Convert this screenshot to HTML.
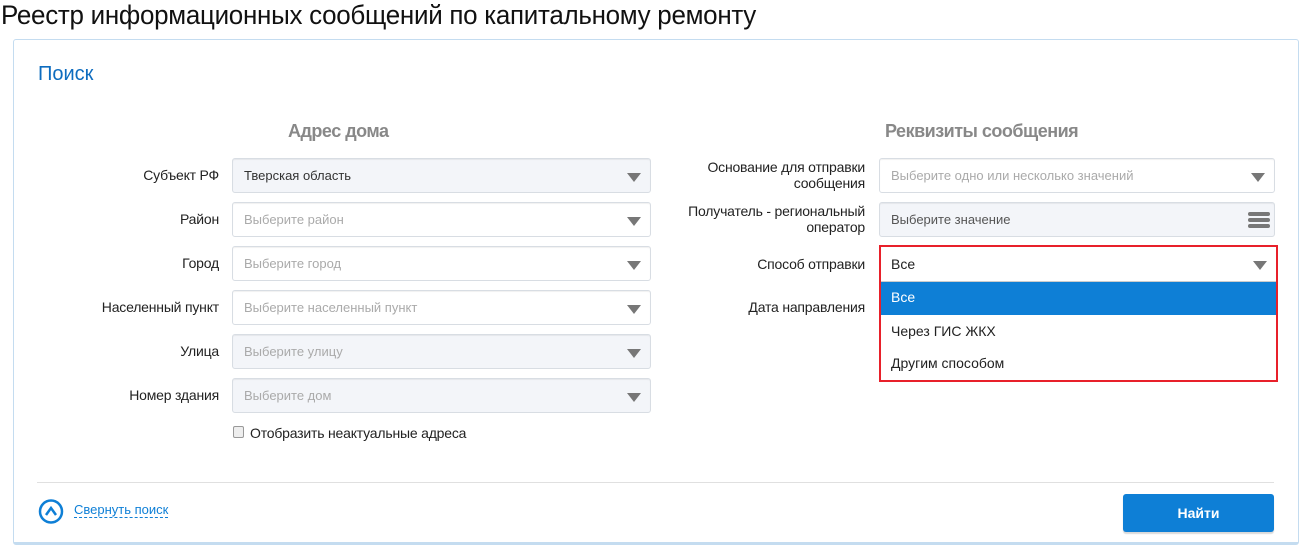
<!DOCTYPE html>
<html><head><meta charset="utf-8"><style>
*{box-sizing:border-box;margin:0;padding:0}
body{width:1304px;height:554px;background:#fff;font-family:"Liberation Sans Narrow","Liberation Sans",sans-serif;position:relative;overflow:hidden;color:#222}
.abs{position:absolute}
h1{position:absolute;left:1px;top:0;font-size:27px;font-weight:normal;color:#111;white-space:nowrap;letter-spacing:-0.3px;transform:scaleX(0.962);transform-origin:0 0}
.panel{position:absolute;left:13px;top:39px;width:1286px;height:506px;border:1px solid #c4dcf0;border-bottom:3px solid #c4dcf0;border-radius:3px}
.lbl{position:absolute;font-size:14px;text-align:right;line-height:16px;color:#222;letter-spacing:-0.2px}
.fld{position:absolute;height:35px;border:1px solid #d8dde3;border-radius:3px;background:#fff;font-size:13px;line-height:33px;padding-left:11px;color:#aaa;box-shadow:inset 0 1px 1px rgba(0,0,0,.06)}
.fld.g{background:#f3f5f9}
.fld.d{color:#333}
.tri{position:absolute;right:9px;top:14px;width:0;height:0;border-left:7px solid transparent;border-right:7px solid transparent;border-top:9px solid #777}
.hd{position:absolute;font-size:18px;color:#888;font-weight:bold;letter-spacing:-0.5px}
</style></head><body>
<h1>Реестр информационных сообщений по капитальному ремонту</h1>
<div class="panel"></div>
<div class="abs" style="left:38px;top:63px;font-size:20px;color:#0d6cbf">Поиск</div>
<div class="hd" style="left:288px;top:121px">Адрес дома</div>
<div class="hd" style="left:885px;top:121px">Реквизиты сообщения</div>

<div class="lbl" style="right:1085px;top:167px">Субъект РФ</div>
<div class="fld g d" style="left:232px;top:158px;width:419px">Тверская область<div class="tri"></div></div>
<div class="lbl" style="right:1085px;top:211px">Район</div>
<div class="fld" style="left:232px;top:202px;width:419px">Выберите район<div class="tri"></div></div>
<div class="lbl" style="right:1085px;top:255px">Город</div>
<div class="fld" style="left:232px;top:246px;width:419px">Выберите город<div class="tri"></div></div>
<div class="lbl" style="right:1085px;top:299px">Населенный пункт</div>
<div class="fld" style="left:232px;top:290px;width:419px">Выберите населенный пункт<div class="tri"></div></div>
<div class="lbl" style="right:1085px;top:343px">Улица</div>
<div class="fld g" style="left:232px;top:334px;width:419px">Выберите улицу<div class="tri"></div></div>
<div class="lbl" style="right:1085px;top:387px">Номер здания</div>
<div class="fld g" style="left:232px;top:378px;width:419px">Выберите дом<div class="tri"></div></div>
<div class="abs" style="left:233px;top:426px;width:11px;height:12px;border:1px solid #999;border-radius:2px;background:#eee"></div>
<div class="abs" style="left:250px;top:425px;font-size:14px;color:#222;letter-spacing:-0.2px">Отобразить неактуальные адреса</div>

<div class="lbl" style="right:439px;top:159px">Основание для отправки<br>сообщения</div>
<div class="fld" style="left:879px;top:158px;width:396px">Выберите одно или несколько значений<div class="tri"></div></div>
<div class="lbl" style="right:439px;top:203px">Получатель - региональный<br>оператор</div>
<div class="fld g d" style="left:879px;top:202px;width:396px;color:#555">Выберите значение
<div class="abs" style="right:4px;top:9px;width:22px;height:4px;background:#777;border-radius:2px"></div>
<div class="abs" style="right:4px;top:15px;width:22px;height:4px;background:#777;border-radius:2px"></div>
<div class="abs" style="right:4px;top:21px;width:22px;height:4px;background:#777;border-radius:2px"></div></div>
<div class="lbl" style="right:439px;top:256px">Способ отправки</div>
<div class="lbl" style="right:439px;top:299px">Дата направления</div>

<div class="abs" style="left:879px;top:245px;width:399px;height:137px;border:2px solid #e8202a;background:#fff">
<div class="abs" style="left:0;top:0;width:395px;height:35px;border-bottom:1px solid #ccc;font-size:14px;line-height:35px;padding-left:10px;color:#222">Все<div class="tri" style="top:14px"></div></div>
<div class="abs" style="left:0;top:35px;width:395px;height:33px;background:#0e7fd6;color:#fff;font-size:14px;line-height:31px;padding-left:10px">Все</div>
<div class="abs" style="left:0;top:68px;width:395px;height:32px;font-size:14px;line-height:32px;padding-left:10px">Через ГИС ЖКХ</div>
<div class="abs" style="left:0;top:100px;width:395px;height:32px;font-size:14px;line-height:32px;padding-left:10px">Другим способом</div>
</div>

<div class="abs" style="left:37px;top:482px;width:1237px;height:1px;background:#e0e0e0"></div>
<svg class="abs" style="left:38px;top:498px" width="26" height="27" viewBox="0 0 26 27"><circle cx="13" cy="13.5" r="11" fill="none" stroke="#0e7fd6" stroke-width="2.5"/><path d="M8 17 L13 10 L18 17" fill="none" stroke="#0e7fd6" stroke-width="2.5"/></svg>
<div class="abs" style="left:74px;top:502px;font-size:13px;color:#0e7fd6;border-bottom:1px dashed #0e7fd6;line-height:15px">Свернуть поиск</div>
<div class="abs" style="left:1123px;top:494px;width:151px;height:38px;background:#0e7fd6;border-radius:3px;color:#fff;font-size:14px;font-weight:bold;text-align:center;line-height:38px;box-shadow:0 2px 1px rgba(0,0,0,.15)">Найти</div>
</body></html>
